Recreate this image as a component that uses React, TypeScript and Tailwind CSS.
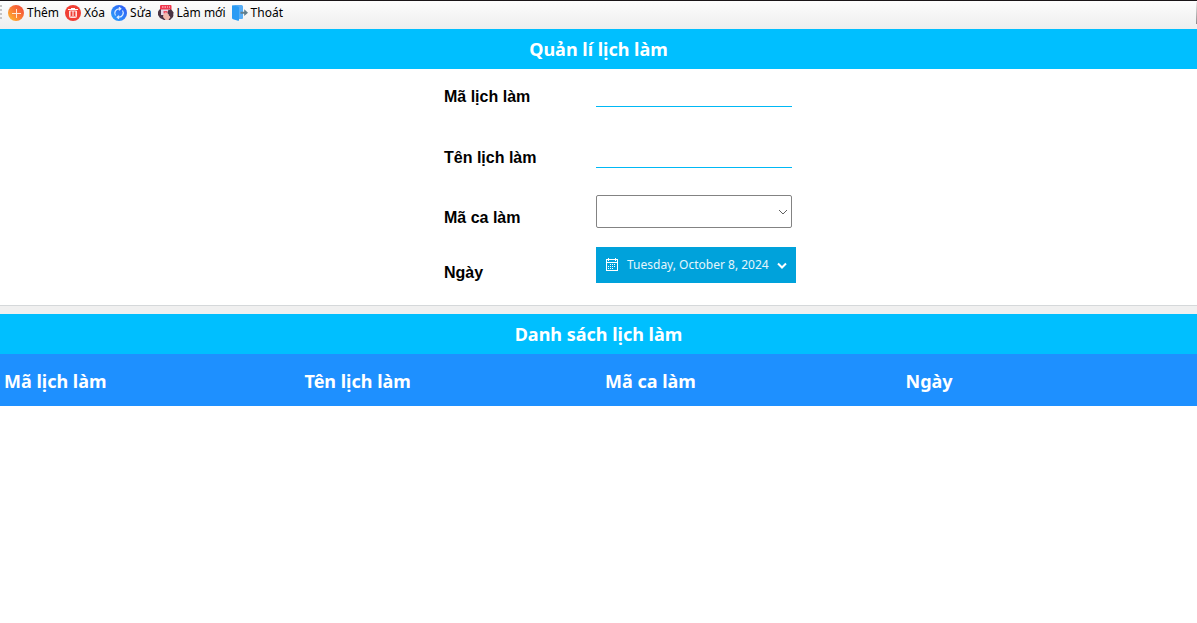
import type { ReactNode } from "react";

const uiFont = "font-['Segoe_UI','Noto_Sans',sans-serif]";

function AddIcon() {
  return (
    <svg className="size-4" viewBox="0 0 16 16" aria-hidden="true">
      <defs>
        <linearGradient id="add" x1="0" y1="1" x2="1" y2="0">
          <stop offset="0" stopColor="#fdc02f" />
          <stop offset="0.5" stopColor="#fb7b34" />
          <stop offset="1" stopColor="#f0433a" />
        </linearGradient>
      </defs>
      <circle cx="8" cy="8" r="8" fill="url(#add)" />
      <path d="M8.5 4v9M4 8.5h9" stroke="#ffe9d8" strokeWidth="1" />
    </svg>
  );
}

function DeleteIcon() {
  return (
    <svg className="size-4" viewBox="0 0 16 16" aria-hidden="true">
      <circle cx="8" cy="8" r="8" fill="#f03e34" />
      <path d="M3 4.5h10M6 3.5h4" fill="none" stroke="#ffffff" strokeWidth="1" />
      <path d="M4.5 6v5.6q0 .9.9.9h5.2q.9 0 .9-.9V6z" fill="#f8a19b" stroke="#ffe3e0" strokeWidth="1" />
      <path d="M6.5 6.5V11M9.5 6.5V11" stroke="#f03e34" strokeWidth="1" />
    </svg>
  );
}

function EditIcon() {
  return (
    <svg className="size-4" viewBox="0 0 16 16" aria-hidden="true">
      <defs>
        <linearGradient id="edit" x1="1" y1="0" x2="0" y2="1">
          <stop offset="0" stopColor="#2f55f5" />
          <stop offset="1" stopColor="#2ba5fb" />
        </linearGradient>
      </defs>
      <circle cx="8" cy="8" r="8" fill="url(#edit)" />
      <path d="M4.5 10.5A4.3 4.3 0 0 1 8 3.8h1.5M11.5 5.5A4.3 4.3 0 0 1 8 12.2H6.5M8 2.2l1.8 1.6L8 5.4M8 10.6l-1.8 1.6L8 13.8" fill="none" stroke="#d9ecff" strokeWidth="1.2" />
    </svg>
  );
}

function RefreshIcon() {
  return (
    <svg className="size-4" viewBox="0 0 16 16" aria-hidden="true">
      <path d="M0 6.5 2 4h11l2.5 3.5L15 12l-3 3H6l-4-2-2-3z" fill="#4a3443" />
      <path d="M3 4h9v6H3z" fill="#e3d9e8" />
      <path d="M2 1Q2 0 3 0h9.5q1 0 1 1v3.5H2z" fill="#f0374e" />
      <path d="M4 2h1.5M6.5 2H8M9 2h1M11 2h1" stroke="#ffe5ea" strokeWidth="1.2" />
      <path d="M5.5 6h4v2.5h-4z" fill="#ef5065" />
      <path d="M5.5 9q1-1 2 0L7 7.5q1-.8 1.8.5l3.7 4-2 3H7.5L5 12z" fill="#f3b9ac" />
      <path d="M10.5 4.5 14 6l1.3 5-2.8 1L9.5 8z" fill="#4a3443" />
    </svg>
  );
}

function ExitIcon() {
  return (
    <svg className="size-4" viewBox="0 0 16 16" aria-hidden="true">
      <path d="M1 0h8.5q1.5 0 1.5 1.5V13q0 1-1 1H5V2z" fill="#56adf5" />
      <path d="M0 1q0-1 1-.8L6 1.6q1 .3 1 1.3v12q0 1.1-1 .9l-5-1.6q-1-.4-1-1.3z" fill="#2b9bf4" />
      <path d="M8.5 6.7h3.7V4.3l3.8 3.4-3.8 3.4V8.7H8.5z" fill="#607d8b" />
    </svg>
  );
}

function ToolButton({ icon, children }: { icon: ReactNode; children: ReactNode }) {
  return (
    <button type="button" className="flex items-center gap-[3px] whitespace-nowrap">
      {icon}
      <span>{children}</span>
    </button>
  );
}

function Banner({ children }: { children: ReactNode }) {
  return (
    <h2 className="flex h-10 items-center justify-center bg-[#00bfff] text-[18px] font-bold text-white">
      {children}
    </h2>
  );
}

function Field({ id, label, children }: { id: string; label: string; children: ReactNode }) {
  return (
    <div className="flex items-end">
      <label
        htmlFor={id}
        className="w-[152px] shrink-0 font-['Liberation_Sans',Arial,sans-serif] text-[16px] leading-5 font-bold text-black"
      >
        {label}
      </label>
      {children}
    </div>
  );
}

const columns = ["Mã lịch làm", "Tên lịch làm", "Mã ca làm", "Ngày"];

export default function App() {
  return (
    <div className={`min-h-screen overflow-x-hidden bg-white ${uiFont}`}>
      <header className="flex h-[29px] items-center justify-between border-t border-[#1a1518] bg-linear-to-b from-[#fdfdfd] to-[#eeeeee] pb-1 text-[12px] text-black">
        <div className="flex items-center gap-[6px]">
          <svg className="-mr-[6px] h-4 w-2" viewBox="0 0 8 16" aria-hidden="true">
            <path d="M0 1h2M0 5h2M0 9h2M0 13h2" stroke="#c4c4c4" strokeWidth="2" />
          </svg>
          <ToolButton icon={<AddIcon />}>Thêm</ToolButton>
          <ToolButton icon={<DeleteIcon />}>Xóa</ToolButton>
          <ToolButton icon={<EditIcon />}>Sửa</ToolButton>
          <ToolButton icon={<RefreshIcon />}>Làm mới</ToolButton>
          <ToolButton icon={<ExitIcon />}>Thoát</ToolButton>
        </div>
        <span className="h-[22px] w-px bg-linear-to-b from-[#eeeeee] to-[#8a8a8a]" />
      </header>

      <Banner>Quản lí lịch làm</Banner>

      <form className="flex justify-center border-b border-[#d5d8da] pt-4 pb-[22px] pl-[43px]">
        <div className="flex w-[352px] flex-col">
          <Field id="schedule-id" label="Mã lịch làm">
            <input id="schedule-id" type="text" className="h-[22px] w-[196px] border-b border-[#00b8f5] outline-none" />
          </Field>
          <div className="mt-[39px]">
            <Field id="schedule-name" label="Tên lịch làm">
              <input id="schedule-name" type="text" className="h-[22px] w-[196px] border-b border-[#00b8f5] outline-none" />
            </Field>
          </div>
          <div className="mt-[27px]">
            <Field id="shift-id" label="Mã ca làm">
              <div className="grid w-[196px] items-center">
                <select
                  id="shift-id"
                  className="col-start-1 row-start-1 h-[33px] w-full appearance-none rounded-xs border border-[#838383] bg-white px-2 text-[14px]"
                />
                <svg className="pointer-events-none col-start-1 row-start-1 mr-1 h-[6px] w-[10px] justify-self-end" viewBox="0 0 10 6" aria-hidden="true">
                  <path d="m1 1 4 4 4-4" fill="none" stroke="#606060" strokeWidth="1" />
                </svg>
              </div>
            </Field>
          </div>
          <div className="mt-[19px]">
            <Field id="work-date" label="Ngày">
              <button
                id="work-date"
                type="button"
                className="flex h-9 w-[200px] items-center bg-[#00a2db] pr-[9px] pl-[10px] text-[12px] whitespace-nowrap text-[#e4f6fc]"
              >
                <svg className="h-[14px] w-3 shrink-0" viewBox="0 0 12 14" shapeRendering="crispEdges" aria-hidden="true">
                  <path d="M0 1.5h12M.5 1v12M11.5 1v12M0 12.5h12M0 4.5h12M2.5 0v3M9.5 0v3" fill="none" stroke="#ffffff" strokeWidth="1" />
                  <path d="M4 6.5h1M6 6.5h1M8 6.5h1M2 8.5h1M4 8.5h1M6 8.5h1M8 8.5h1M2 10.5h1M4 10.5h1M6 10.5h1" stroke="#ffffff" strokeWidth="1" />
                </svg>
                <span className="ml-[9px] flex-1 text-left">Tuesday, October 8, 2024</span>
                <svg className="h-[7px] w-[10px] shrink-0" viewBox="0 0 10 7" aria-hidden="true">
                  <path d="m1 1.5 4 4 4-4" fill="none" stroke="#ffffff" strokeWidth="2" />
                </svg>
              </button>
            </Field>
          </div>
        </div>
      </form>

      <div className="h-2 bg-[#f0f0f0]" />

      <section>
        <Banner>Danh sách lịch làm</Banner>
        <table className="w-[calc(100%+5px)] table-fixed">
          <thead>
            <tr className="h-[52px] bg-[#1e90ff] text-left text-[18px] text-white">
              {columns.map((name) => (
                <th key={name} scope="col" className="pt-[3px] pl-1 font-bold">
                  {name}
                </th>
              ))}
            </tr>
          </thead>
          <tbody />
        </table>
      </section>
    </div>
  );
}
